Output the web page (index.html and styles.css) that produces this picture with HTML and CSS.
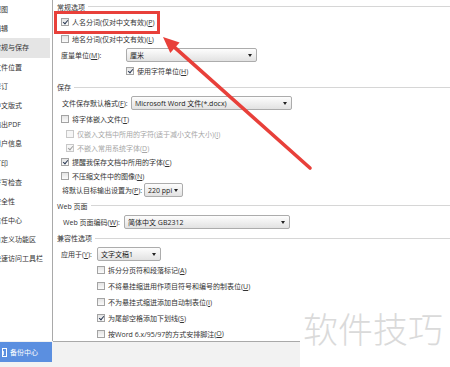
FILE: index.html
```html
<!DOCTYPE html>
<html lang="zh-CN">
<head>
<meta charset="utf-8">
<title>选项</title>
<link rel="stylesheet" href="styles.css">
</head>
<body>
<div class="win">
  <div class="main">
    <nav class="side">
      <div class="nav-item">视图</div>
      <div class="nav-item">编辑</div>
      <div class="nav-item active">常规与保存</div>
      <div class="nav-item">文件位置</div>
      <div class="nav-item">修订</div>
      <div class="nav-item">中文版式</div>
      <div class="nav-item">输出PDF</div>
      <div class="nav-item">用户信息</div>
      <div class="nav-item">打印</div>
      <div class="nav-item">拼写检查</div>
      <div class="nav-item">安全性</div>
      <div class="nav-item">信任中心</div>
      <div class="nav-item">自定义功能区</div>
      <div class="nav-item">快速访问工具栏</div>
    </nav>
    <section class="content">
      <div class="row hdr h13"><span>常规选项</span><i class="rule"></i></div>
      <div class="row h18 p1"><label class="hl"><span class="cb on"></span>人名分词(仅对中文有效)(<u>P</u>)</label></div>
      <div class="row p8"><span class="cb"></span>地名分词(仅对中文有效)(<u>L</u>)</div>
      <div class="row p8"><span class="lbl w65">度量单位(<u>M</u>):</span><span class="sel w131"><span>厘米</span><i class="caret"></i></span></div>
      <div class="row p73"><span class="cb on"></span>使用字符单位(<u>H</u>)</div>
      <div class="row hdr"><span>保存</span><i class="rule"></i></div>
      <div class="row p9"><span class="lbl w69">文件保存默认格式(<u>F</u>):</span><span class="sel w161"><span>Microsoft Word 文件(*.docx)</span><i class="caret"></i></span></div>
      <div class="row p8"><span class="cb"></span>将字体嵌入文件(<u>T</u>)</div>
      <div class="row h14 p13 dis"><span class="cb"></span>仅嵌入文档中所用的字符(适于减小文件大小)(<u>I</u>)</div>
      <div class="row h14 p13 dis"><span class="cb on"></span>不嵌入常用系统字体(<u>D</u>)</div>
      <div class="row h14 p8"><span class="cb on"></span>提醒我保存文档中所用的字体(<u>C</u>)</div>
      <div class="row h14 p8"><span class="cb"></span>不压缩文件中的图像(<u>N</u>)</div>
      <div class="row h14 p9"><span class="lbl w82">将默认目标输出设置为(<u>P</u>):</span><span class="sel w39"><span>220 ppi</span><i class="caret"></i></span></div>
      <div class="row hdr h17"><span>Web 页面</span><i class="rule"></i></div>
      <div class="row p10"><span class="lbl w61">Web 页面编码(<u>W</u>):</span><span class="sel w166"><span>简体中文 GB2312</span><i class="caret"></i></span></div>
      <div class="row hdr"><span>兼容性选项</span><i class="rule"></i></div>
      <div class="row p8"><span class="lbl w36">应用于(<u>Y</u>):</span><span class="sel w64"><span>文字文稿1</span><i class="caret"></i></span></div>
      <div class="row p44"><span class="cb"></span>拆分分页符和段落标记(<u>A</u>)</div>
      <div class="row p44"><span class="cb"></span>不将悬挂缩进用作项目符号和编号的制表位(<u>U</u>)</div>
      <div class="row p44"><span class="cb"></span>不为悬挂式缩进添加自动制表位(<u>I</u>)</div>
      <div class="row p44"><span class="cb on"></span>为尾部空格添加下划线(<u>S</u>)</div>
      <div class="row h15 p44"><span class="cb"></span>按Word 6.x/95/97的方式安排脚注(<u>O</u>)</div>
    </section>
  </div>
  <div class="foot">
    <div class="foot-side">
      <button class="backup" type="button">
        <svg class="bk-icon" width="5" height="9" viewBox="0 0 5 9"><rect x="0.5" y="0.5" width="4" height="8" fill="none" stroke="#fff" stroke-width="1"/><line x1="1.5" y1="3" x2="1.5" y2="7" stroke="#fff" stroke-width="0.8"/></svg>
        <span>备份中心</span>
      </button>
    </div>
    <div class="foot-bar"></div>
    <div class="foot-rest"></div>
  </div>
</div>
<div class="watermark">软件技巧</div>
<svg class="annot" width="450" height="367" viewBox="0 0 450 367">
  <line x1="174.9" y1="47.6" x2="310" y2="168" stroke="#e8403a" stroke-width="3.6" stroke-linecap="round"/>
  <polygon points="163,37 179.6,42.4 170.3,52.9" fill="#e8403a"/>
</svg>
</body>
</html>
```
FILE: styles.css
```css
* { box-sizing: border-box; margin: 0; padding: 0; }
html, body { width: 450px; height: 367px; overflow: hidden; background: #fff; }
body {
  position: relative;
  font-family: "Open Sans", "Noto Sans CJK SC", sans-serif;
  font-size: 7px;
  color: #333;
}
u { text-decoration: underline; text-underline-offset: 1px; }

.win { display: flex; flex-direction: column; height: 367px; }
.main { display: flex; height: 341px; }

.side {
  width: 53px;
  flex: none;
  border-right: 1px solid #a9a9a9;
  overflow: hidden;
  font-family: "Open Sans", "Noto Sans CJK SC", sans-serif;
}
.nav-item {
  width: 50px;
  height: 19.2px;
  line-height: 19.2px;
  white-space: nowrap;
  text-indent: -6px;
}
.nav-item.active { background: #e5e5e5; }

.content { flex: 1; min-width: 0; overflow: hidden; }
.row { display: flex; align-items: center; height: 16px; white-space: nowrap; }
.h13 { height: 13px; }
.h14 { height: 14px; }
.h15 { height: 15px; }
.h17 { height: 17px; }
.h18 { height: 18px; }
.p1 { padding-left: 1px; }
.p8 { padding-left: 8px; }
.p9 { padding-left: 9px; }
.p10 { padding-left: 10px; }
.p13 { padding-left: 13px; }
.p44 { padding-left: 44px; }
.p73 { padding-left: 73px; }

.hdr { padding-left: 4px; }
.rule { flex: 1; height: 1px; background: #d6d6d6; margin-left: 3px; }

.hl {
  display: flex;
  align-items: center;
  height: 23px;
  flex: none;
  border: 3px solid #e8403a;
  padding: 0 2px 0 4px;
}

.cb {
  position: relative;
  flex: none;
  width: 8px;
  height: 8px;
  margin-right: 3px;
  border: 1px solid #a3a3a3;
  background: linear-gradient(#e4e4e4, #fbfbfb);
}
.cb.on::after {
  content: "";
  position: absolute;
  left: 2px;
  top: 0;
  width: 2px;
  height: 4px;
  border: solid #2b3a55;
  border-width: 0 1.2px 1.2px 0;
  transform: rotate(40deg);
}
.dis { color: #a6a6a6; }
.dis .cb { border-color: #c8c8c8; background: #f6f6f6; }
.dis .cb.on::after { border-color: #a0a0a0; }

.lbl { flex: none; }
.w36 { width: 36px; }
.w61 { width: 61px; }
.w65 { width: 65px; }
.w69 { width: 69px; }
.w82 { width: 82px; }

.sel {
  display: flex;
  align-items: center;
  justify-content: space-between;
  flex: none;
  height: 14px;
  padding: 0 4px 0 3px;
  border: 1px solid #acacac;
  border-radius: 2px;
  background: linear-gradient(#fdfdfd, #e2e2e2);
  color: #222;
}
.w39 { width: 39px; }
.w64 { width: 64px; }
.w131 { width: 131px; }
.w161 { width: 161px; }
.w166 { width: 166px; }
.caret {
  width: 0;
  height: 0;
  border-left: 2.5px solid transparent;
  border-right: 2.5px solid transparent;
  border-top: 3px solid #222;
}

.foot { display: flex; height: 26px; }
.foot-side { width: 53px; flex: none; background: #f2f2f2; padding-top: 1px; }
.foot-bar { width: 247px; flex: none; background: #f2f2f2; border-top: 1px solid #a9a9a9; }
.foot-rest { flex: 1; background: #fff; }
.backup {
  display: flex;
  align-items: center;
  gap: 3px;
  width: 52px;
  height: 20px;
  padding-left: 2px;
  border: 0;
  background: #5b8fe0;
  color: #fff;
  font: inherit;
  font-size: 7px;
}
.bk-icon { flex: none; }

.watermark {
  position: absolute;
  left: 303px;
  top: 310px;
  font-family: "Noto Sans CJK SC", sans-serif;
  font-weight: 300;
  font-size: 35px;
  line-height: 1;
  color: #dadada;
  letter-spacing: 0;
}
.annot { position: absolute; left: 0; top: 0; pointer-events: none; }
```
